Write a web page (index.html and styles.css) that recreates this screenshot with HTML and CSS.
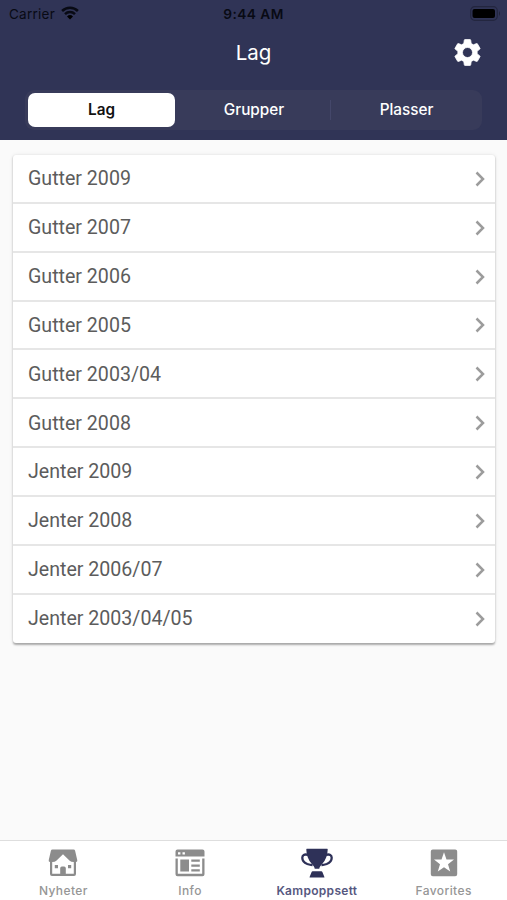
FILE: index.html
```html
<!DOCTYPE html>
<html lang="no">
<head>
<meta charset="utf-8">
<title>Lag</title>
<link rel="stylesheet" href="styles.css">
</head>
<body>
<div class="app">
  <header class="header">
    <div class="status">
      <div class="status-left"><span class="carrier">Carrier</span>
        <svg class="wifi" viewBox="0 0 18 14"><path d="M9 13.400 6 10.400a4.300 4.300 0 0 1 6 0z"/><path class="arc" d="M4 8.100a7.200 7.200 0 0 1 10 0M1.100 5a11.200 11.200 0 0 1 15.800 0"/></svg>
      </div>
      <span class="time">9:44 AM</span>
      <div class="status-right">
        <svg class="battery" viewBox="0 0 31 15"><rect class="case" x=".7" y=".7" width="26.600" height="13.600" rx="4"/><rect x="2.500" y="3" width="22.500" height="9" rx="2"/><path class="tip" d="M29 5q2 2.500 0 5z"/></svg>
      </div>
    </div>
    <div class="titlebar">
      <h1>Lag</h1>
      <svg class="gear" viewBox="0 0 24 24"><path d="M19.430 12.980c.04-.32.07-.64.07-.98s-.03-.66-.07-.98l2.110-1.650c.19-.15.24-.42.12-.64l-2-3.460c-.12-.22-.39-.3-.61-.22l-2.490 1c-.52-.4-1.080-.73-1.690-.98l-.38-2.650C14.460 2.180 14.250 2 14 2h-4c-.25 0-.46.18-.49.42l-.38 2.650c-.61.25-1.170.59-1.690.98l-2.490-1c-.23-.09-.49 0-.61.22l-2 3.460c-.13.22-.07.49.12.64l2.110 1.650c-.04.32-.07.65-.07.98s.03.66.07.98l-2.110 1.650c-.19.15-.24.42-.12.64l2 3.460c.12.22.39.3.61.22l2.490-1c.52.4 1.080.73 1.690.98l.38 2.650c.03.24.24.42.49.42h4c.25 0 .46-.18.49-.42l.38-2.650c.61-.25 1.170-.59 1.690-.98l2.490 1c.23.09.49 0 .61-.22l2-3.460c.12-.22.07-.49-.12-.64l-2.110-1.650zM12 15.900a3.900 3.900 0 1 1 0-7.800 3.900 3.900 0 0 1 0 7.800z"/></svg>
    </div>
    <nav class="segments">
      <span class="segment selected">Lag</span>
      <span class="segment middle">Grupper</span>
      <i class="divider"></i>
      <span class="segment">Plasser</span>
    </nav>
  </header>
  <main class="content">
    <ul class="list">
      <li><span>Gutter 2009</span><svg viewBox="0 0 10 16"><path d="m1.500 1.500 6.500 6.500-6.500 6.500"/></svg></li>
      <li><span>Gutter 2007</span><svg viewBox="0 0 10 16"><path d="m1.500 1.500 6.500 6.500-6.500 6.500"/></svg></li>
      <li><span>Gutter 2006</span><svg viewBox="0 0 10 16"><path d="m1.500 1.500 6.500 6.500-6.500 6.500"/></svg></li>
      <li><span>Gutter 2005</span><svg viewBox="0 0 10 16"><path d="m1.500 1.500 6.500 6.500-6.500 6.500"/></svg></li>
      <li><span>Gutter 2003/04</span><svg viewBox="0 0 10 16"><path d="m1.500 1.500 6.500 6.500-6.500 6.500"/></svg></li>
      <li><span>Gutter 2008</span><svg viewBox="0 0 10 16"><path d="m1.500 1.500 6.500 6.500-6.500 6.500"/></svg></li>
      <li><span>Jenter 2009</span><svg viewBox="0 0 10 16"><path d="m1.500 1.500 6.500 6.500-6.500 6.500"/></svg></li>
      <li><span>Jenter 2008</span><svg viewBox="0 0 10 16"><path d="m1.500 1.500 6.500 6.500-6.500 6.500"/></svg></li>
      <li><span>Jenter 2006/07</span><svg viewBox="0 0 10 16"><path d="m1.500 1.500 6.500 6.500-6.500 6.500"/></svg></li>
      <li><span>Jenter 2003/04/05</span><svg viewBox="0 0 10 16"><path d="m1.500 1.500 6.500 6.500-6.500 6.500"/></svg></li>
    </ul>
  </main>
  <nav class="tabs">
    <div class="tab">
      <svg viewBox="0 0 32 30"><path fill-rule="evenodd" d="M5.500 1.500h21q1.300 0 1.600 1.200l2.200 9.600q.3 1.700-1.300 1.700V26q0 2-2 2H5q-2 0-2-2V14q-1.600 0-1.300-1.700l2.200-9.600q.3-1.200 1.600-1.200zM16 6.300 9.300 12.700Q8 14 5.200 14v11.700h8v-5.500q0-1.700 1.700-1.700h2.200q1.700 0 1.700 1.700v5.500h8V14q-2.800 0-4.100-1.300zM7.800 17h3.200v3.200H7.800zM21 17h3.200v3.200H21z"/></svg>
      <span>Nyheter</span>
    </div>
    <div class="tab">
      <svg viewBox="0 0 32 30"><path fill-rule="evenodd" d="M3.500 1.500h25q2 0 2 2v5H1.500v-5q0-2 2-2zM4 4.200v2.200h2.400V4.200zM8.500 4.200v2.200h2.400V4.200zM1.500 10.500h2.300v15.200h24.400V10.500h2.300v15.700q0 2-2 2h-25q-2 0-2-2zM6.300 11.500H15v12H6.300zM17.300 11.500h8.500v2.300h-8.500zM17.300 16.400h8.500v2.300h-8.500zM17.300 21.300h8.500v2.300h-8.500z"/></svg>
      <span>Info</span>
    </div>
    <div class="tab active">
      <svg viewBox="0 0 32 30"><path d="M5.800.8h20.400q.6 0 .5.700Q26.500 10 21.500 15.500 18.300 19 18.300 20.800h-4.600q0-1.800-3.200-5.300Q5.500 10 5.300 1.500q0-.7.5-.7zM11.800 23.300h8.400q1 0 1.300 1l1.900 4.600q.2.700-.5.700H9.100q-.7 0-.5-.7l1.900-4.600q.3-1 1.300-1z"/><path class="handles" d="M7 6.800Q1.300 5.500 1.300 9.800q0 4.300 5 6.200 3.200 1.100 5.200 1M25 6.800q5.700-1.300 5.700 3 0 4.300-5 6.200-3.200 1.100-5.200 1"/></svg>
      <span>Kampoppsett</span>
    </div>
    <div class="tab">
      <svg viewBox="0 0 32 30"><path fill-rule="evenodd" d="M4.800 1.500h22.400q2 0 2 2v22.700q0 2-2 2H4.800q-2 0-2-2V3.500q0-2 2-2zM16 4.300l-2.500 7.200-7.500.1 6 4.600-2.200 7.300L16 19.200l6.200 4.300-2.200-7.300 6-4.600-7.500-.1z"/></svg>
      <span>Favorites</span>
    </div>
  </nav>
</div>
</body>
</html>
```
FILE: styles.css
```css
* {
  box-sizing: border-box;
}

body {
  margin: 0;
  font-family: Inter, "Liberation Sans", sans-serif;
  background: #fafafa;
}

.app {
  display: flex;
  flex-direction: column;
  height: 900px;
}

.header {
  height: 140px;
  background: #303456;
  color: #fff;
}

.status {
  display: grid;
  grid-template-columns: 1fr auto 1fr;
  align-items: center;
  height: 28px;
  padding: 0 6px 0 9px;
  color: #080a14;
  font-size: 13px;
}

.status-left {
  display: flex;
  align-items: center;
  gap: 6px;
}

.carrier {
  font-size: 13.5px;
  letter-spacing: 0.25px;
}

.wifi {
  width: 18px;
  height: 14px;
  margin-top: -2px;
}

.arc {
  fill: none;
  stroke: #080a14;
  stroke-width: 2.5;
}

.time {
  margin-right: 3px;
  font-size: 13.7px;
  font-weight: 600;
  letter-spacing: 0.45px;
}

.status-right {
  display: flex;
  justify-content: flex-end;
}

.battery {
  width: 31px;
  height: 15px;
  margin-top: -2px;
}

.case {
  fill: none;
  stroke: #23263f;
  stroke-width: 1.2;
}

.tip {
  fill: #202338;
}

.titlebar {
  display: grid;
  grid-template-columns: 1fr auto 1fr;
  align-items: center;
  height: 48px;
  padding-right: 24px;
}

.titlebar h1 {
  grid-column: 2;
  margin: 0 0 0 24px;
  font-size: 20.5px;
  font-weight: 400;
}

.gear {
  justify-self: end;
  width: 31px;
  height: 31px;
  fill: #fff;
  stroke: #fff;
  stroke-width: 0.6;
}

.segments {
  display: flex;
  align-items: center;
  height: 40px;
  margin: 14px 25px 0;
  padding: 0 0 0 3px;
  border-radius: 9px;
  background: #383b5a;
  font-size: 15.3px;
  font-weight: 500;
}

.segment {
  flex: 1;
  height: 34px;
  line-height: 34px;
  text-align: center;
}

.segment.middle {
  flex: 0 0 155px;
  padding-left: 3px;
}

.segment.selected {
  flex: 0 0 147px;
  border-radius: 7px;
  background: #fff;
  color: #111;
  font-weight: 600;
}

.divider {
  width: 1px;
  height: 20px;
  background: #44476a;
}

.content {
  flex: 1;
  padding: 14.500px 12px 0 13px;
}

.list {
  margin: 0;
  padding: 0.5px 0 0;
  list-style: none;
  border-radius: 3px;
  background: #fff;
  box-shadow: 0 1.500px 2px rgba(0, 0, 0, 0.3), 0 0 4px rgba(0, 0, 0, 0.08);
}

.list li {
  display: flex;
  align-items: center;
  justify-content: space-between;
  height: 48.850px;
  padding: 1px 10px 0 15px;
  border-bottom: 2px solid #e6e6e6;
  color: #5c5c5c;
  font: 19.600px Roboto, sans-serif;
}

.list li:last-child {
  border-bottom-color: transparent;
}

.list svg {
  width: 10px;
  height: 16px;
  fill: none;
  stroke: #9c9c9c;
  stroke-width: 2.5;
}

.tabs {
  display: grid;
  grid-template-columns: repeat(4, 1fr);
  height: 60px;
  border-top: 1px solid #dedede;
  background: #fff;
}

.tab {
  display: flex;
  flex-direction: column;
  align-items: center;
  padding-top: 7px;
  color: #969696;
  font-size: 12px;
  font-weight: 500;
  letter-spacing: 0.4px;
}

.tab svg {
  width: 32px;
  height: 30px;
  fill: #8c8c8c;
}

.tab span {
  margin-top: 5px;
  line-height: 16px;
}

.tab.active {
  color: #56587f;
  font-weight: 600;
  letter-spacing: 0.3px;
}

.tab.active svg {
  fill: #2e3158;
}

.handles {
  fill: none;
  stroke: #2e3158;
  stroke-width: 2.3;
}
```
